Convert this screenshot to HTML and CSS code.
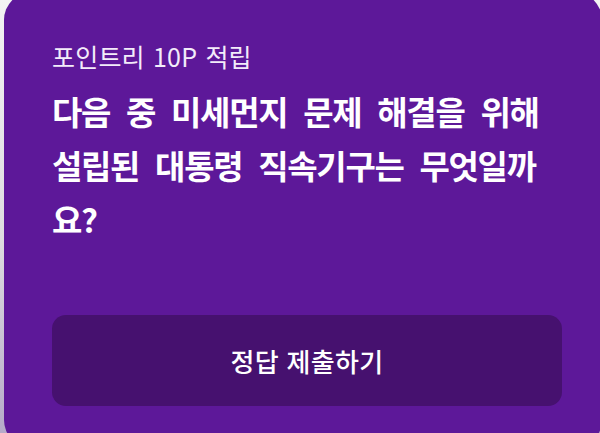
FILE: index.html
```html
<!DOCTYPE html>
<html lang="ko">
<head>
<meta charset="utf-8">
<link rel="stylesheet" href="styles.css">
</head>
<body>
<div class="stage">
  <section class="card">
    <p class="label">포인트리 10P 적립</p>
    <h1 class="question">다음 중 미세먼지 문제 해결을 위해 설립된 대통령 직속기구는 무엇일까요?</h1>
    <button class="submit" type="button">정답 제출하기</button>
  </section>
</div>
</body>
</html>
```

FILE: styles.css
```css
html, body {
  margin: 0;
  padding: 0;
  width: 600px;
  height: 433px;
  overflow: hidden;
  background: linear-gradient(180deg, #f3f3f3 0%, #dedcdf 55%, #b6aac9 100%);
  font-family: "Noto Sans CJK KR", "Noto Sans", sans-serif;
}

.stage {
  padding-left: 4px;
  margin-top: -8px;
}

.card {
  box-sizing: border-box;
  width: 598px;
  height: 456px;
  background: #5d1899;
  border-radius: 28px;
  padding: 48px 40px 0 48px;
  display: flex;
  flex-direction: column;
  color: #ffffff;
}

.label {
  margin: 0;
  font-size: 25px;
  line-height: 32px;
  font-weight: 400;
  letter-spacing: 0.2px;
  word-spacing: 1px;
  color: #f3ecfa;
}

.question {
  margin: 12px 0 0 0;
  font-size: 33px;
  line-height: 54px;
  font-weight: 700;
  letter-spacing: -1.3px;
  word-spacing: 8px;
  color: #ffffff;
}

.submit {
  margin-top: 69px;
  height: 91px;
  width: 510px;
  border: none;
  border-radius: 14px;
  background: #46116f;
  color: #ffffff;
  font-family: "Noto Sans CJK KR", "Noto Sans", sans-serif;
  font-size: 26px;
  font-weight: 500;
  letter-spacing: 0.3px;
  word-spacing: 0;
  padding: 0;
}
```
